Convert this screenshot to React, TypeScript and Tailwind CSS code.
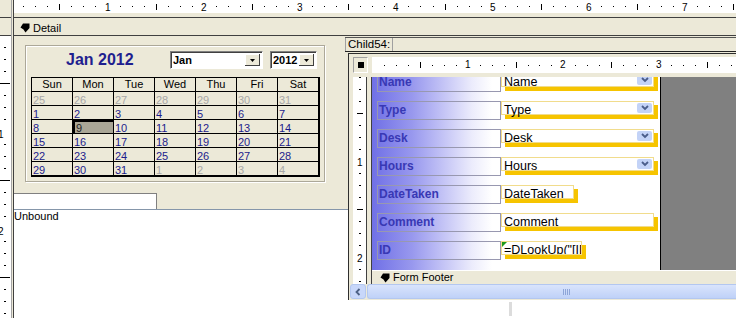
import React from 'react';

type HRulerProps = {
  origin: number;
  inch: number;
  length: number;
  height: number;
  dotY: number;
  longY: number;
  longH: number;
  numTop: number;
};

function HRuler({ origin, inch, length, height, dotY, longY, longH, numTop }: HRulerProps) {
  const marks: React.ReactNode[] = [];
  const nums: React.ReactNode[] = [];
  for (let i = -8; i < 200; i++) {
    const x = Math.round(origin + (i * inch) / 8);
    if (x > length + 4) break;
    if (x < -4) continue;
    const m = ((i % 8) + 8) % 8;
    if (m === 0) {
      if (i > 0)
        nums.push(
          <span key={i} className="absolute text-[10px] leading-[10px]" style={{ left: x - 3, top: numTop }}>
            {i / 8}
          </span>
        );
    } else if (m === 4) {
      marks.push(<rect key={i} x={x} y={longY} width={1} height={longH} fill="#000" />);
    } else {
      marks.push(<rect key={i} x={x} y={dotY} width={1} height={1} fill="#000" />);
    }
  }
  return (
    <div className="relative h-full w-full overflow-hidden bg-white">
      <svg className="absolute left-0 top-0" width={length} height={height}>
        {marks}
      </svg>
      {nums}
    </div>
  );
}

type VRulerProps = {
  origin: number;
  inch: number;
  length: number;
  width: number;
  dashX: number;
  dashW: number;
  longX: number;
  longW: number;
  numLeft: number;
  numDy: number;
};

function VRuler({ origin, inch, length, width, dashX, dashW, longX, longW, numLeft, numDy }: VRulerProps) {
  const marks: React.ReactNode[] = [];
  const nums: React.ReactNode[] = [];
  for (let i = -8; i < 200; i++) {
    const y = Math.round(origin + (i * inch) / 8);
    if (y > length + 4) break;
    if (y < -4) continue;
    const m = ((i % 8) + 8) % 8;
    if (m === 0) {
      if (i > 0)
        nums.push(
          <span key={i} className="absolute text-[10px] leading-[10px]" style={{ left: numLeft, top: y + numDy }}>
            {i / 8}
          </span>
        );
    } else if (m === 4) {
      marks.push(<rect key={i} x={longX} y={y} width={longW} height={1} fill="#000" />);
    } else {
      marks.push(<rect key={i} x={dashX} y={y} width={dashW} height={1} fill="#000" />);
    }
  }
  return (
    <div className="relative h-full w-full overflow-hidden bg-white">
      <svg className="absolute left-0 top-0" width={width} height={length}>
        {marks}
      </svg>
      {nums}
    </div>
  );
}

function SectionIcon() {
  return (
    <svg width="10" height="10" viewBox="0 0 10 10" className="shrink-0">
      <polygon points="3,0.5 9.5,0.5 9.5,5 5.5,9.5 3.5,6.5 0.5,4.5" fill="#000" />
    </svg>
  );
}

function Chevron() {
  return (
    <svg width="8" height="6" viewBox="0 0 8 6">
      <path d="M1 1 L4 4 L7 1" stroke="#4a5d8a" strokeWidth="1.8" fill="none" />
    </svg>
  );
}

const days = ['Sun', 'Mon', 'Tue', 'Wed', 'Thu', 'Fri', 'Sat'];
type Cell = { d: number; gray?: boolean; sel?: boolean };
const weeks: Cell[][] = [
  [25, 26, 27, 28, 29, 30, 31].map((d) => ({ d, gray: true })),
  [1, 2, 3, 4, 5, 6, 7].map((d) => ({ d })),
  [8, 9, 10, 11, 12, 13, 14].map((d) => ({ d, sel: d === 9 })),
  [15, 16, 17, 18, 19, 20, 21].map((d) => ({ d })),
  [22, 23, 24, 25, 26, 27, 28].map((d) => ({ d })),
  [29, 30, 31].map((d) => ({ d } as Cell)).concat([1, 2, 3, 4].map((d) => ({ d, gray: true }))),
];

type Field = { label: string; value: string; w: string; combo?: boolean; flag?: boolean };
const fields: Field[] = [
  { label: 'Name', value: 'Name', w: 'w-[153px]', combo: true },
  { label: 'Type', value: 'Type', w: 'w-[153px]', combo: true },
  { label: 'Desk', value: 'Desk', w: 'w-[153px]', combo: true },
  { label: 'Hours', value: 'Hours', w: 'w-[153px]', combo: true },
  { label: 'DateTaken', value: 'DateTaken', w: 'w-[73px]' },
  { label: 'Comment', value: 'Comment', w: 'w-[153px]' },
  { label: 'ID', value: '=DLookUp("[ID]","tblDesk")', w: 'w-[81px]', flag: true },
];

function ComboBox({ w, text }: { w: string; text: string }) {
  return (
    <div
      className={`${w} flex h-[18px] items-center border border-b-white border-l-[#808080] border-r-white border-t-[#808080] bg-white shadow-[inset_1px_1px_0_#404040]`}
    >
      <span className="pl-[2px] text-[11px] font-bold leading-[13px]">{text}</span>
      <div className="ml-auto mr-[2px] flex h-[12px] w-[15px] items-center justify-center bg-[#ECE9D8] shadow-[inset_-1px_-1px_0_#404040,inset_1px_1px_0_#fff]">
        <svg width="5" height="3" viewBox="0 0 5 3">
          <polygon points="0,0 5,0 2.5,3" fill="#000" />
        </svg>
      </div>
    </div>
  );
}

export default function App() {
  return (
    <div className="flex h-[318px] w-[736px] overflow-hidden bg-white font-['Liberation_Sans',Arial,sans-serif] text-black">
      {/* outer left ruler column */}
      <div className="flex w-[11px] shrink-0 flex-col bg-[#ECE9D8]">
        <div className="h-[17px] shrink-0" />
        <div className="h-[19px] shrink-0 border-y border-[#404040]" />
        <div className="min-h-0 flex-1">
          <VRuler origin={-1.5} inch={97} length={282} width={11} dashX={4} dashW={2} longX={0} longW={10} numLeft={-2} numDy={-2} />
        </div>
      </div>
      {/* separator */}
      <div className="w-[3px] shrink-0 border-x border-l-[#a5a5a5] border-r-[#404040] bg-[#ECE9D8]" />
      {/* main */}
      <div className="flex min-w-0 flex-1 flex-col bg-[#ECE9D8]">
        <div className="h-[13px] shrink-0">
          <HRuler origin={-2.8} inch={96.3} length={722} height={13} dotY={6} longY={4} longH={6} numTop={3} />
        </div>
        <div className="h-[4px] shrink-0" />
        <div className="flex h-[19px] shrink-0 items-center gap-[3px] border-y border-[#404040] pl-[6px] pt-[3px]">
          <SectionIcon />
          <span className="text-[11px] leading-[13px]">Detail</span>
        </div>

        <div className="flex min-h-0 flex-1">
          {/* left panel */}
          <div className="flex w-[334px] shrink-0 flex-col">
            <div className="flex h-[173px] shrink-0 flex-col bg-[#ECE9D8]">
              <div className="ml-[11px] mt-[9px] h-[137px] w-[300px] border border-[#aca899] pl-[5px] pt-[5px] shadow-[inset_1px_1px_0_#fff,1px_1px_0_#fff]">
                <div className="flex h-[18px] items-center">
                  <div className="ml-[35px] w-[104px] text-[16px] font-bold leading-[18px] text-[#1f1f8f]">Jan 2012</div>
                  <ComboBox w="w-[93px]" text="Jan" />
                  <div className="w-[7px]" />
                  <ComboBox w="w-[47px]" text="2012" />
                </div>
                <div className="mt-[8px] grid w-fit grid-cols-[repeat(7,40px)] gap-px border-b-2 border-l border-r-2 border-t border-black bg-black">
                  {days.map((d) => (
                    <div key={d} className="h-[13px] bg-[#ECE9D8] text-center text-[11px] leading-[13px]">
                      {d}
                    </div>
                  ))}
                  {weeks.flat().map((c, i) =>
                    c.sel ? (
                      <div
                        key={i}
                        className="h-[13px] overflow-hidden bg-[#a9a696] pl-[3px] pt-[3px] text-[11px] leading-[11px] text-[#1e1e1e] shadow-[inset_2px_2px_0_#000]"
                      >
                        {c.d}
                      </div>
                    ) : c.gray ? (
                      <div key={i} className="h-[13px] overflow-hidden bg-[#ECE9D8] pl-px pt-[3px] text-[11px] leading-[11px] text-[#a8a8a8]">
                        {c.d}
                      </div>
                    ) : (
                      <div key={i} className="h-[13px] overflow-hidden bg-[#ECE9D8] pl-px pt-[3px] text-[11px] leading-[11px] text-[#1c1c8c]">
                        {c.d}
                      </div>
                    )
                  )}
                </div>
              </div>
              <div className="mt-[11px] h-[16px] w-[143px] border-r border-t border-[#808080] bg-white" />
            </div>
            <div className="h-px shrink-0 bg-[#8596aa]" />
            <div className="flex-1 bg-white">
              <div className="text-[11px] leading-[13px]">Unbound</div>
            </div>
          </div>

          {/* right panel */}
          <div className="-ml-[3px] flex min-w-0 flex-1 flex-col">
            <div className="h-px shrink-0" />
            <div className="flex h-[15px] shrink-0 border-y border-b-[#222] border-t-[#555] bg-[#ECE9D8]">
              <div className="border-x border-[#a0a0a0] px-[2px] text-[11.5px] leading-[13px]">Child54:</div>
            </div>
            <div className="h-px shrink-0" />

            {/* subform */}
            <div className="ml-[3px] flex shrink-0 flex-col border-l border-t border-[#2e2e2e] bg-[#ECE9D8] pb-px pt-[3px]">
              <div className="flex h-[16px]">
                <div className="ml-[4px] flex w-[15px] items-center justify-center border border-b-white border-l-[#a0a0a0] border-r-white border-t-[#a0a0a0]">
                  <div className="h-[6px] w-[6px] bg-black" />
                </div>
                <div className="w-[4px]" />
                <div className="min-w-0 flex-1">
                  <HRuler origin={0.2} inch={95.6} length={364} height={16} dotY={8} longY={5} longH={6} numTop={3} />
                </div>
              </div>
              <div className="h-[4px]" />
              <div className="flex h-[207px]">
                <div className="ml-[4px] w-[14px] border-r border-[#404040] bg-white">
                  <VRuler origin={-12} inch={96} length={207} width={13} dashX={6} dashW={2} longX={4} longW={6} numLeft={4} numDy={-3} />
                </div>
                <div className="w-[5px] border-r border-[#404040]" />
                <div className="flex min-w-0 flex-1 flex-col">
                  <div className="flex h-[193px]">
                    <div className="w-[289px] shrink-0 overflow-hidden border-r border-black bg-[linear-gradient(90deg,#7070e6_0px,#9898ee_40px,#c6c6f6_73px,#ececfc_100px,#ffffff_120px)] pl-[5px]">
                      <div className="-mt-[4px] flex flex-col gap-[9px]">
                        {fields.map((f) => (
                          <div key={f.label} className="flex h-[19px]">
                            <div className="h-[19px] w-[124px] shrink-0 border border-[#9898b0] pl-px pt-px text-[12px] font-bold leading-[14px] text-[#3838b4]">
                              {f.label}
                            </div>
                            <div
                              className={`relative h-[14px] ${f.w} shrink-0 whitespace-nowrap border border-[#f1dc8c] bg-white pl-[2px] text-[12.5px] leading-[16px] shadow-[4px_4px_0_0_#f6c400] ${f.flag ? 'overflow-hidden' : ''}`}
                            >
                              {f.value}
                              {f.combo && (
                                <div className="absolute right-px top-px flex h-[10px] w-[15px] items-center justify-center rounded-[2px] bg-[#c3d3f7]">
                                  <Chevron />
                                </div>
                              )}
                              {f.flag && (
                                <div className="absolute left-0 top-0 h-0 w-0 border-r-[5px] border-t-[5px] border-r-transparent border-t-[#1c9a1c]" />
                              )}
                            </div>
                          </div>
                        ))}
                      </div>
                    </div>
                    <div className="flex-1 bg-[#808080]" />
                  </div>
                  <div className="flex h-[14px] items-center gap-[3px] border-t border-white pl-[8px]">
                    <SectionIcon />
                    <span className="text-[11px] leading-[13px]">Form Footer</span>
                  </div>
                </div>
              </div>
              <div className="ml-px flex h-[15px]">
                <div className="flex w-[16px] items-center justify-center rounded-[3px] border border-[#b3c7f0] bg-[#c8d7fa]">
                  <svg width="6" height="8" viewBox="0 0 6 8">
                    <path d="M4.5 1 L1.5 4 L4.5 7" stroke="#4d6185" strokeWidth="1.8" fill="none" />
                  </svg>
                </div>
                <div className="ml-px flex flex-1 items-center rounded-l-[3px] border border-r-0 border-[#b3c7f0] bg-[linear-gradient(#d9e4fc,#bfd1f8)] pl-[195px]">
                  <div className="flex gap-px">
                    <div className="h-[6px] w-px bg-[#8ea5d8]" />
                    <div className="h-[6px] w-px bg-[#8ea5d8]" />
                    <div className="h-[6px] w-px bg-[#8ea5d8]" />
                    <div className="h-[6px] w-px bg-[#8ea5d8]" />
                  </div>
                </div>
              </div>
            </div>

            <div className="min-h-0 flex-1 bg-white">
              <div className="ml-[164px] mt-[2px] h-[14px] w-[3px] bg-[#dcdcdc]" />
            </div>
          </div>
        </div>
      </div>
    </div>
  );
}
